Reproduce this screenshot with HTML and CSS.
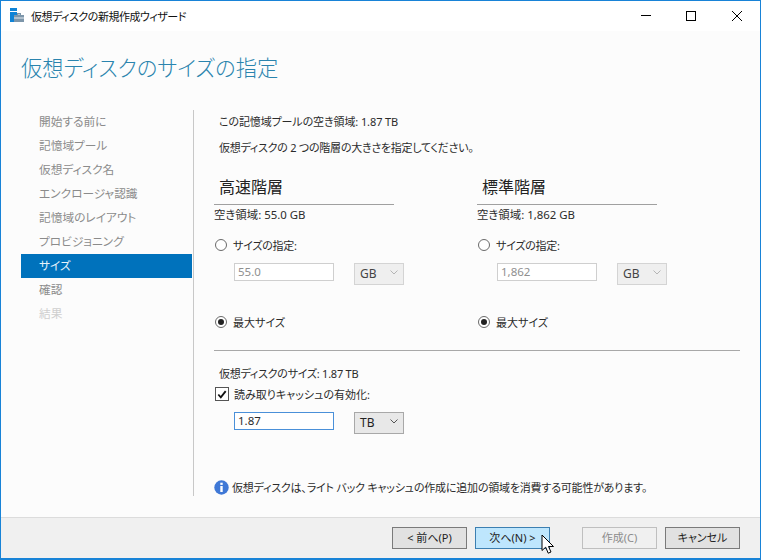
FILE: index.html
```html
<!DOCTYPE html>
<html lang="ja">
<head>
<meta charset="utf-8">
<title>仮想ディスクの新規作成ウィザード</title>
<link rel="stylesheet" href="styles.css">
</head>
<body>
<div class="window">
  <header class="titlebar">
    <svg class="app-icon" width="15" height="15" viewBox="0 0 15 15">
      <rect x="0" y="0" width="7" height="3" fill="#0f83d6"/>
      <rect x="0" y="4" width="7" height="3" fill="#0f83d6"/>
      <rect x="0" y="7" width="4" height="7" fill="#0f83d6"/>
      <rect x="4" y="7" width="10" height="7" fill="#7d96aa"/>
      <rect x="7.5" y="5.5" width="3" height="1.5" fill="none" stroke="#7d96aa" stroke-width="1"/>
      <rect x="4" y="9.5" width="10" height="1" fill="#e3eaf0"/>
    </svg>
    <span class="title-text">仮想ディスクの新規作成ウィザード</span>
    <div class="win-controls">
      <svg width="12" height="12" viewBox="0 0 12 12"><path d="M2 5.5H12" stroke="#000" fill="none"/></svg>
      <svg width="12" height="12" viewBox="0 0 12 12"><rect x="1.5" y="1.5" width="9" height="9" stroke="#000" fill="none"/></svg>
      <svg width="12" height="12" viewBox="0 0 12 12"><path d="M1 1L11 11M11 1L1 11" stroke="#000" fill="none"/></svg>
    </div>
  </header>
  <div class="client">
    <h1 class="page-title">仮想ディスクのサイズの指定</h1>
    <div class="main">
      <nav class="steps">
        <div class="step">開始する前に</div>
        <div class="step">記憶域プール</div>
        <div class="step">仮想ディスク名</div>
        <div class="step">エンクロージャ認識</div>
        <div class="step">記憶域のレイアウト</div>
        <div class="step">プロビジョニング</div>
        <div class="step active">サイズ</div>
        <div class="step">確認</div>
        <div class="step disabled">結果</div>
      </nav>
      <section class="content">
        <p class="line first">この記憶域プールの空き領域: 1.87 TB</p>
        <p class="line second">仮想ディスクの 2 つの階層の大きさを指定してください。</p>
        <div class="tiers">
          <div class="tier">
            <h2 class="tier-title">高速階層</h2>
            <div class="free">空き領域: 55.0 GB</div>
            <label class="radio-row"><span class="radio"></span>サイズの指定:</label>
            <div class="size-row">
              <div class="field off">55.0</div>
              <div class="combo off">GB<svg class="chev" width="8" height="5" viewBox="0 0 8 5"><path d="M0.5 0.5L4 4L7.5 0.5" stroke="#b5b5b5" fill="none"/></svg></div>
            </div>
            <label class="radio-row max"><span class="radio on"></span>最大サイズ</label>
          </div>
          <div class="tier">
            <h2 class="tier-title">標準階層</h2>
            <div class="free">空き領域: 1,862 GB</div>
            <label class="radio-row"><span class="radio"></span>サイズの指定:</label>
            <div class="size-row">
              <div class="field off">1,862</div>
              <div class="combo off">GB<svg class="chev" width="8" height="5" viewBox="0 0 8 5"><path d="M0.5 0.5L4 4L7.5 0.5" stroke="#b5b5b5" fill="none"/></svg></div>
            </div>
            <label class="radio-row max"><span class="radio on"></span>最大サイズ</label>
          </div>
        </div>
        <hr class="rule">
        <p class="line vsize">仮想ディスクのサイズ: 1.87 TB</p>
        <label class="check-row">
          <span class="check"><svg width="13" height="13" viewBox="0 0 13 13"><path d="M2.5 6.5L5.2 9.5L10.5 2.8" stroke="#111" stroke-width="2" fill="none"/></svg></span>読み取りキャッシュの有効化:
        </label>
        <div class="size-row cache">
          <div class="field focus">1.87</div>
          <div class="combo">TB<svg class="chev" width="8" height="5" viewBox="0 0 8 5"><path d="M0.5 0.5L4 4L7.5 0.5" stroke="#555" fill="none"/></svg></div>
        </div>
        <div class="info">
          <svg width="15" height="15" viewBox="0 0 15 15"><circle cx="7.5" cy="7.5" r="7.2" fill="#3f78d6"/><rect x="6.3" y="2.7" width="2.4" height="2.2" fill="#fff"/><rect x="6.3" y="6" width="2.4" height="6" fill="#fff"/></svg>
          <span>仮想ディスクは、ライト バック キャッシュの作成に追加の領域を消費する可能性があります。</span>
        </div>
      </section>
    </div>
  </div>
  <footer class="footer">
    <button class="btn">&lt; 前へ(P)</button>
    <button class="btn hover">次へ(N) &gt;</button>
    <button class="btn dis">作成(C)</button>
    <button class="btn">キャンセル</button>
    <svg class="cursor" width="14" height="21" viewBox="0 0 14 21"><path d="M1 1V16.5L4.7 13.2L7.2 19.2L10 18L7.5 12.5H12.5Z" fill="#fff" stroke="#000"/></svg>
  </footer>
</div>
</body>
</html>
```
FILE: styles.css
```css
* { box-sizing: border-box; }
html, body { margin: 0; padding: 0; }
body {
  width: 761px;
  height: 560px;
  overflow: hidden;
  font-family: "Noto Sans", "Noto Sans CJK JP", sans-serif;
  font-feature-settings: "palt";
  font-size: 11px;
  color: #2b2b2b;
}
.window {
  position: relative;
  width: 761px;
  height: 560px;
  border: 1px solid #1883d7;
  border-bottom-width: 2px;
  display: flex;
  flex-direction: column;
  background: #fcfcfc;
}
.titlebar {
  height: 30px;
  flex: none;
  background: #fff;
  display: flex;
  align-items: center;
  padding-left: 9px;
}
.app-icon { flex: none; margin-top: -1px; }
.title-text { margin-left: 6px; font-size: 11px; letter-spacing: -0.5px; color: #111; }
.win-controls {
  margin-left: auto;
  display: flex;
  align-items: center;
  gap: 34px;
  padding-right: 17px;
}
.client { flex: 1; display: flex; flex-direction: column; min-height: 0; }
.page-title {
  margin: 19px 0 0 20px;
  height: 36px;
  line-height: 36px;
  font-size: 21.3px;
  font-weight: 300;
  color: #2a84ae;
}
.main { display: flex; margin-top: 24px; padding-left: 20px; }
.steps { width: 171px; flex: none; }
.step { height: 24px; line-height: 23px; padding-left: 18px; color: #8b8b8b; font-size: 11.7px; }
.step.active { background: #0072bc; color: #e8f3fb; }
.step.disabled { color: #cfcfcf; }
.content {
  width: 548px;
  height: 386px;
  margin-left: 1px;
  border-left: 1px solid #c8c8c8;
  padding-left: 20px;
  display: flex;
  flex-direction: column;
}
.line { margin: 0; height: 18px; line-height: 18px; padding-left: 5px; font-size: 11px; }
.line.first { margin-top: 3px; letter-spacing: -0.1px; }
.line.second { margin-top: 8px; letter-spacing: -0.25px; }
.tiers { display: flex; margin-top: 18px; }
.tier { width: 263px; flex: none; }
.tier-title {
  margin: 0;
  width: 180px;
  height: 30px;
  line-height: 24px;
  padding-left: 5px;
  font-size: 16px;
  font-weight: 400;
  color: #222;
  border-bottom: 1px solid #a0a0a0;
}
.free { height: 22px; line-height: 20px; font-size: 11.4px; }
.radio-row {
  display: flex;
  align-items: center;
  gap: 6px;
  height: 18px;
  margin-top: 9px;
  padding-left: 1px;
  font-size: 11px;
  letter-spacing: -0.25px;
}
.radio-row.max { margin-top: 28px; letter-spacing: 0; }
.radio {
  width: 12px;
  height: 12px;
  border: 1px solid #6a6a6a;
  border-radius: 50%;
  background: #fff;
  flex: none;
  display: flex;
  align-items: center;
  justify-content: center;
}
.radio.on::after {
  content: "";
  width: 6px;
  height: 6px;
  background: #222;
  border-radius: 50%;
}
.size-row { display: flex; align-items: flex-start; gap: 20px; margin-top: 9px; padding-left: 20px; }
.field {
  width: 100px;
  height: 18px;
  line-height: 16px;
  padding-left: 3px;
  border: 1px solid #7aa9d8;
  background: #fff;
  font-family: "Noto Sans", sans-serif;
  font-size: 11.5px;
}
.field.off { border-color: #cfcfcf; color: #8f8f8f; }
.field.focus { border-color: #4a90d9; }
.combo {
  position: relative;
  width: 50px;
  height: 22px;
  line-height: 20px;
  padding-left: 5px;
  background: #e8e8e8;
  border: 1px solid #a8a8a8;
  font-family: "Noto Sans", sans-serif;
  font-size: 12px;
  color: #222;
  display: flex;
}
.combo.off { background: #efefef; border-color: #d4d4d4; color: #444; }
.chev { margin-left: auto; margin-right: 5px; margin-top: 6px; }
.rule { width: 526px; height: 1px; border: 0; background: #a8a8a8; margin: 19px 0 0; flex: none; }
.line.vsize { margin-top: 14px; letter-spacing: -0.25px; }
.check-row { display: flex; align-items: center; gap: 5px; height: 18px; margin-top: 2px; padding-left: 1px; font-size: 11px; }
.check {
  width: 14px;
  height: 14px;
  flex: none;
  border: 1px solid #555;
  background: #fff;
  display: flex;
  align-items: center;
  justify-content: center;
}
.cache { margin-top: 9px; }
.info { display: flex; align-items: center; gap: 3px; margin-top: 44px; font-size: 11px; letter-spacing: -0.2px; height: 18px; }
.info svg { flex: none; }
.footer {
  position: relative;
  flex: none;
  height: 41px;
  background: #f0f0f0;
  border-top: 1px solid #dcdcdc;
  display: flex;
  align-items: flex-start;
  justify-content: flex-end;
  gap: 8px;
  padding: 9px 20px 0 0;
}
.btn {
  width: 75px;
  height: 22px;
  padding: 0;
  background: #e1e1e1;
  border: 1px solid #7a7a7a;
  font-family: inherit;
  font-feature-settings: inherit;
  font-size: 11px;
  line-height: 18px;
  color: #222;
}
.btn.hover { background: #bee6fd; border-color: #3c7fb1; }
.btn.dis { margin-left: 24px; background: #f0f0f0; border-color: #bfbfbf; color: #8c8c8c; }
.cursor { position: absolute; left: 540px; top: 16px; }
```
